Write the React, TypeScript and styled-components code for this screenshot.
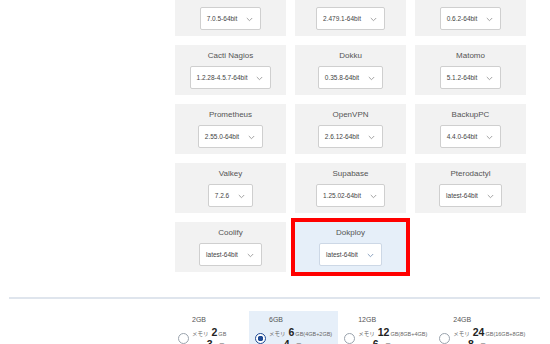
import React from 'react'
import styled, { createGlobalStyle } from 'styled-components'

const GlobalStyle = createGlobalStyle`
    html, body {
        margin: 0;
        padding: 0;
        background: #fff;
    }
    body {
        font-family: 'Liberation Sans', Arial, sans-serif;
        overflow: hidden;
    }
`

interface AppItem {
    name: string;
    version: string;
    selected?: boolean;
}

interface Plan {
    label: string;
    memory: string;
    detail?: string;
    cpu: string;
    selected?: boolean;
}

const apps: AppItem[] = [
    { name: 'Redis', version: '7.0.5-64bit' },
    { name: 'Jenkins', version: '2.479.1-64bit' },
    { name: 'Mastodon', version: '0.6.2-64bit' },
    { name: 'Cacti Nagios', version: '1.2.28-4.5.7-64bit' },
    { name: 'Dokku', version: '0.35.8-64bit' },
    { name: 'Matomo', version: '5.1.2-64bit' },
    { name: 'Prometheus', version: '2.55.0-64bit' },
    { name: 'OpenVPN', version: '2.6.12-64bit' },
    { name: 'BackupPC', version: '4.4.0-64bit' },
    { name: 'Valkey', version: '7.2.6' },
    { name: 'Supabase', version: '1.25.02-64bit' },
    { name: 'Pterodactyl', version: 'latest-64bit' },
    { name: 'Coolify', version: 'latest-64bit' },
    { name: 'Dokploy', version: 'latest-64bit', selected: true },
]

const plans: Plan[] = [
    { label: '2GB', memory: '2', cpu: '3' },
    { label: '6GB', memory: '6', detail: '(4GB+2GB)', cpu: '4', selected: true },
    { label: '12GB', memory: '12', detail: '(8GB+4GB)', cpu: '6' },
    { label: '24GB', memory: '24', detail: '(16GB+8GB)', cpu: '8' },
]

const Chevron = ({ blue }: { blue?: boolean }) => (
    <svg width="7" height="5" viewBox="0 0 7 5">
        <path
            d="M0.8 1 L3.5 3.7 L6.2 1"
            fill="none"
            stroke={blue ? '#7f97b8' : '#999'}
            strokeWidth="0.9"
        />
    </svg>
)

const App = () => {
    return (
        <React.Fragment>
            <GlobalStyle />
            <Page>
                <AppGrid>
                    {apps.map((app) => (
                        <AppCard key={app.name} $selected={app.selected}>
                            <AppName>{app.name}</AppName>
                            <VersionSelect $selected={app.selected}>
                                <span>{app.version}</span>
                                <Chevron blue={app.selected} />
                            </VersionSelect>
                        </AppCard>
                    ))}
                </AppGrid>
                <Divider />
                <PlanRow>
                    {plans.map((plan) => (
                        <PlanOption key={plan.label} $selected={plan.selected}>
                            <PlanLabel>{plan.label}</PlanLabel>
                            <Radio $checked={plan.selected} />
                            <Spec>
                                <SpecLine>
                                    <Small>メモリ</Small>
                                    <Big>{plan.memory}</Big>
                                    <Small>GB{plan.detail}</Small>
                                </SpecLine>
                                <SpecLine>
                                    <Small>CPU</Small>
                                    <Big>{plan.cpu}</Big>
                                    <Small>コア</Small>
                                </SpecLine>
                            </Spec>
                        </PlanOption>
                    ))}
                </PlanRow>
            </Page>
        </React.Fragment>
    )
}

export default App


const Page = styled.div`
    width: 550px;
    height: 344px;
    overflow: hidden;
`

const AppGrid = styled.div`
    display: grid;
    grid-template-columns: repeat(3, 111px);
    grid-auto-rows: 50px;
    gap: 9px;
    margin: -14px 0 0 175px;
`

const AppCard = styled.div<{ $selected?: boolean }>`
    display: flex;
    flex-direction: column;
    align-items: center;
    padding-top: 5px;
    box-sizing: border-box;
    background: ${(p) => (p.$selected ? '#e6eff9' : '#f2f2f2')};
    outline: ${(p) => (p.$selected ? '4px solid #ff0000' : 'none')};
`

const AppName = styled.div`
    font-size: 8px;
    line-height: 11px;
    color: #555;
    margin-bottom: 5px;
    white-space: nowrap;
`

const VersionSelect = styled.div<{ $selected?: boolean }>`
    display: inline-flex;
    align-items: center;
    gap: 9px;
    height: 23px;
    box-sizing: border-box;
    padding: 0 7px 0 6px;
    background: #fff;
    border: 1px solid ${(p) => (p.$selected ? '#cdd8e6' : '#cfcfcf')};
    border-radius: 2px;
    font-size: 6.5px;
    color: #444;
    white-space: nowrap;
    svg {
        flex: none;
        margin-top: 1px;
    }
`

const Divider = styled.div`
    height: 2px;
    margin: 25px 10px 0 9px;
    background: #dfe5ed;
`

const PlanRow = styled.div`
    display: flex;
    margin-top: 12px;
    padding-left: 172px;
`

const PlanOption = styled.div<{ $selected?: boolean }>`
    display: grid;
    grid-template-columns: 11px auto;
    column-gap: 3px;
    align-content: start;
    min-width: 77px;
    box-sizing: border-box;
    padding: 4px 6px 0;
    height: 44px;
    background: ${(p) => (p.$selected ? '#e6eff9' : 'transparent')};
`

const PlanLabel = styled.div`
    grid-column: 2;
    font-size: 7px;
    line-height: 9px;
    color: #555;
    margin-bottom: 2px;
`

const Radio = styled.span<{ $checked?: boolean }>`
    grid-column: 1;
    align-self: center;
    width: 11px;
    height: 11px;
    box-sizing: border-box;
    border-radius: 50%;
    border: ${(p) => (p.$checked ? '1.5px solid #1f4a94' : '1px solid #9aa3ad')};
    background: ${(p) =>
        p.$checked
            ? 'radial-gradient(circle, #1f4a94 0 2.6px, #fff 3px)'
            : '#fff'};
`

const Spec = styled.div`
    grid-column: 2;
    display: flex;
    flex-direction: column;
`

const SpecLine = styled.div`
    display: flex;
    align-items: baseline;
    height: 12px;
    line-height: 12px;
    white-space: nowrap;
    color: #444;
`

const Small = styled.span`
    font-size: 5.5px;
    color: #666;
    font-family: 'Liberation Sans', 'Noto Sans CJK JP', sans-serif;
`

const Big = styled.span`
    font-size: 10.5px;
    font-weight: bold;
    color: #222;
    margin: 0 1px 0 3px;
`
